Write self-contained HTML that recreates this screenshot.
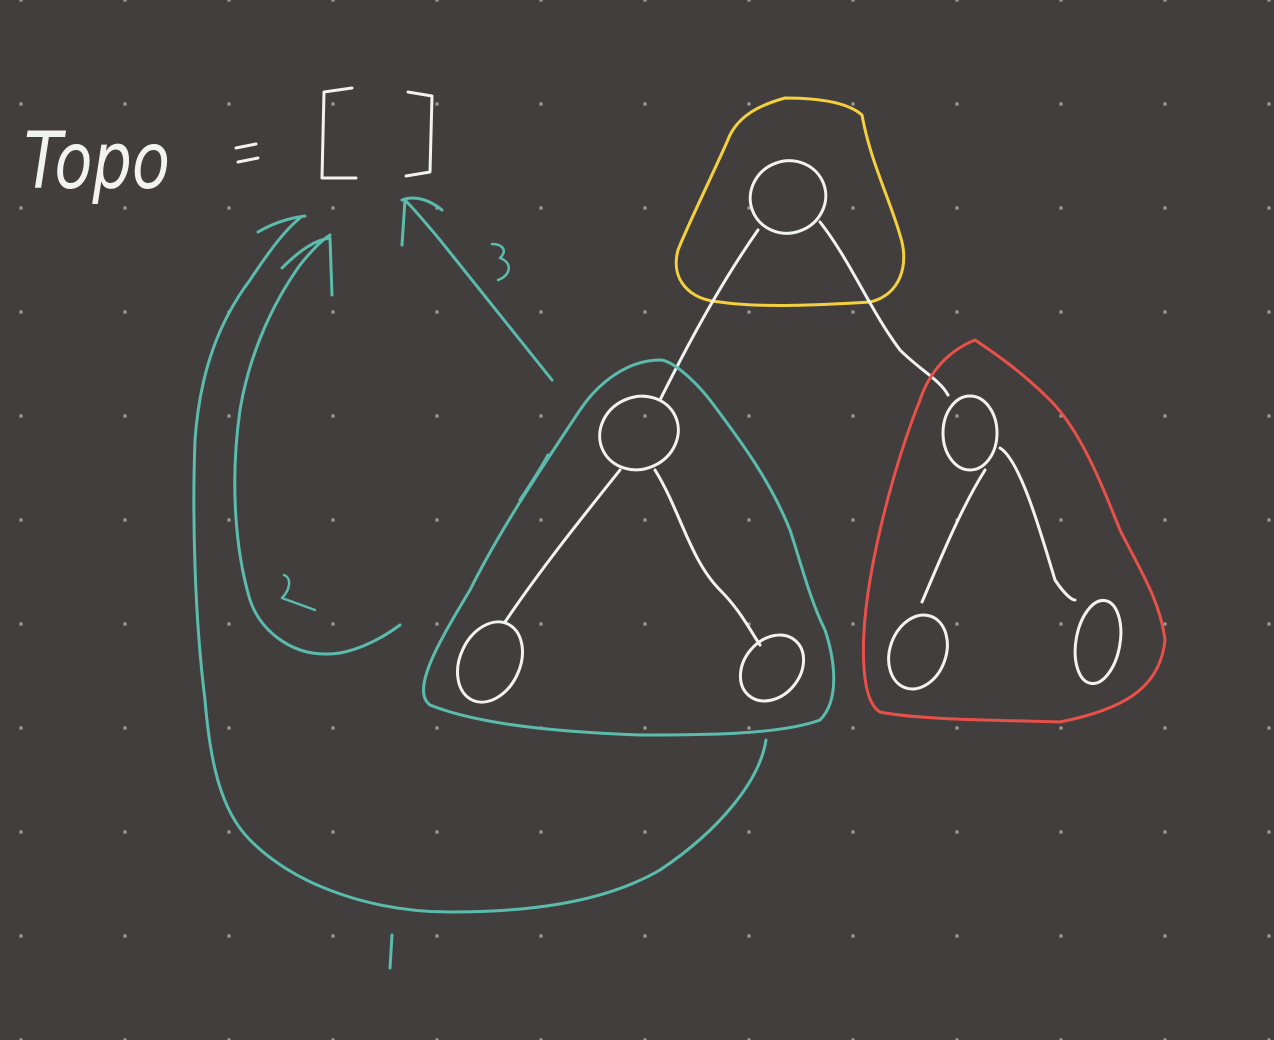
<!DOCTYPE html>
<html><head><meta charset="utf-8"><style>
html,body{margin:0;padding:0;background:#423e3d;}
svg{display:block}
</style></head><body>
<svg width="1274" height="1040" viewBox="0 0 1274 1040" xmlns="http://www.w3.org/2000/svg">
<defs><pattern id="d" x="21" y="0" width="104" height="104" patternUnits="userSpaceOnUse"><circle cx="0" cy="0" r="1.8" fill="#9a9693"/><circle cx="104" cy="0" r="1.8" fill="#9a9693"/><circle cx="0" cy="104" r="1.8" fill="#9a9693"/><circle cx="104" cy="104" r="1.8" fill="#9a9693"/></pattern></defs>
<rect width="1274" height="1040" fill="#423e3d"/>
<rect width="1274" height="1040" fill="url(#d)"/>
<g fill="none" stroke-linecap="round" stroke-linejoin="round" stroke-width="3">
<text x="24" y="188" font-family="DejaVu Sans ExtraLight, DejaVu Sans, sans-serif" font-weight="200" font-size="78" fill="#f2f2f2" stroke="none" style="font-style:italic" textLength="146" lengthAdjust="spacingAndGlyphs">Topo</text>
<path d="M236 148 L256 144 M238 162 L258 158" stroke="#f2f2f2"/>
<path d="M352 88 L324 92 L322 178 L356 178" stroke="#f2f2f2"/>
<path d="M408 92 L432 96 L430 172 L406 176" stroke="#f2f2f2"/>
<path d="M785 98 C760 105 740 115 730 135 C715 170 690 220 678 250 C670 280 690 300 720 302 C760 308 820 305 870 302 C900 295 910 265 900 235 C890 200 870 160 862 115 C845 100 810 98 785 98 Z" stroke="#f4d03f"/>
<g stroke="#f2f2f2">
<ellipse cx="788" cy="197" rx="38" ry="36" transform="rotate(-20 788 197)"/>
<path d="M758 230 C730 270 700 320 660 400"/>
<path d="M820 222 C850 260 870 310 900 350 C920 370 940 380 948 395"/>
<ellipse cx="639" cy="433" rx="40" ry="36" transform="rotate(-25 639 433)"/>
<path d="M620 470 C580 520 540 570 505 622"/>
<path d="M655 470 C680 510 690 560 720 590 C740 610 750 630 760 645"/>
<ellipse cx="490" cy="662" rx="30" ry="42" transform="rotate(25 490 662)"/>
<ellipse cx="772" cy="668" rx="28" ry="36" transform="rotate(40 772 668)"/>
<ellipse cx="970" cy="433" rx="27" ry="37"/>
<path d="M985 470 C960 510 940 560 922 602"/>
<path d="M1000 448 C1020 460 1040 530 1055 580 C1065 595 1072 600 1075 600"/>
<ellipse cx="918" cy="652" rx="28" ry="38" transform="rotate(20 918 652)"/>
<ellipse cx="1098" cy="642" rx="22" ry="42" transform="rotate(10 1098 642)"/>
</g>
<path d="M975 340 C950 350 930 370 920 400 C900 450 880 520 870 580 C860 640 860 700 880 712 C920 720 1000 720 1060 722 C1120 710 1160 690 1165 640 C1160 600 1140 570 1120 530 C1100 480 1080 430 1050 400 C1020 370 990 350 975 340 Z" stroke="#e8514a"/>
<g stroke="#5bbcad">
<path d="M660 360 C630 360 600 380 580 410 C540 470 500 530 470 590 C440 640 410 690 430 705 C480 725 560 732 640 735 C700 735 780 735 820 720 C840 700 835 660 825 630 C810 600 800 560 790 530 C770 480 740 440 710 400 C690 375 670 360 660 360 Z"/>
<path d="M548 455 C540 470 530 485 520 500"/>
<path d="M766 740 C760 780 720 830 660 870 C600 905 520 912 450 912 C380 912 300 890 250 840 C220 810 210 760 205 700 C195 620 192 520 195 440 C200 370 220 320 250 280 C270 250 285 230 300 218 M258 232 C275 222 290 218 305 216"/>
<path d="M400 625 C380 640 350 655 325 654 C290 654 260 630 250 600 C235 550 230 480 240 410 C250 350 275 300 300 265 C312 250 322 240 330 235 M282 268 C300 250 315 240 330 238 L332 295"/>
<path d="M552 380 C520 340 480 290 440 240 C425 222 415 210 405 200 L402 245 M402 200 C415 195 430 200 442 210"/>
<path d="M492 244 C502 244 508 250 500 258 C512 262 512 275 498 280" stroke-width="2.5"/>
<path d="M284 575 C292 578 290 590 282 598 L315 610" stroke-width="2.5"/>
<path d="M392 935 L390 968"/>
</g>
</g>
</svg>
</body></html>
